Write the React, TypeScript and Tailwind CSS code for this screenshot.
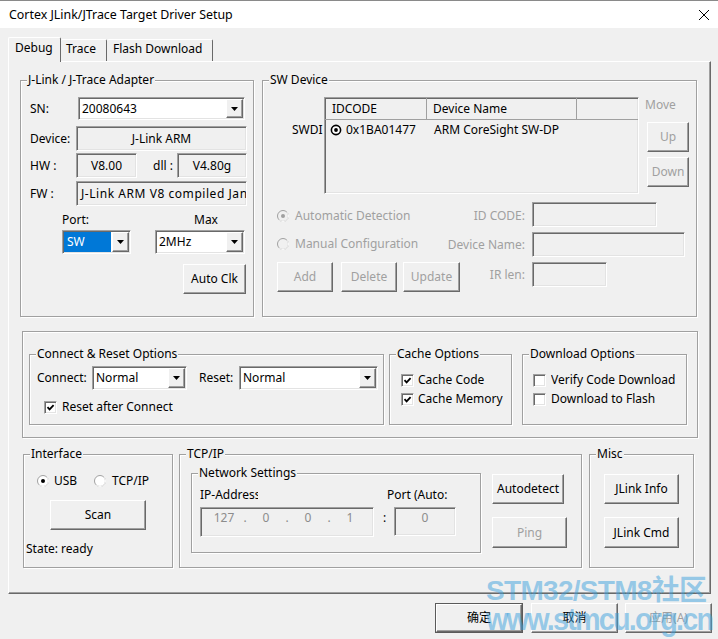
import type { ReactNode } from 'react'

const sunken =
  'border border-t-[#a0a0a0] border-l-[#a0a0a0] border-r-white border-b-white shadow-[inset_1px_1px_0_#696969,inset_-1px_-1px_0_#e3e3e3]'
const raised =
  'border border-t-white border-l-white border-r-[#696969] border-b-[#696969] shadow-[inset_-1px_-1px_0_#a0a0a0]'

function Group({ title, className = '', children }: { title?: string; className?: string; children?: ReactNode }) {
  return (
    <div className={`relative shrink-0 border border-[#a0a0a0] shadow-[inset_1px_1px_0_#fff,1px_1px_0_#fff] ${className}`}>
      {title && (
        <span className="absolute left-[6px] top-[-9px] bg-[#f0f0f0] px-px whitespace-nowrap">{title}</span>
      )}
      {children}
    </div>
  )
}

function Field({ className = '', white = false, children }: { className?: string; white?: boolean; children?: ReactNode }) {
  return (
    <div className={`flex items-center shrink-0 ${sunken} ${white ? 'bg-white' : 'bg-[#f0f0f0]'} ${className}`}>
      {children}
    </div>
  )
}

function Combo({ value, className = '', highlight = false }: { value: string; className?: string; highlight?: boolean }) {
  return (
    <div className={`flex shrink-0 bg-white p-px ${sunken} ${className}`}>
      <div className={`flex-1 flex min-w-0 ${highlight ? '' : 'pl-[2px]'}`}>
        <span
          className={`whitespace-nowrap flex items-center ${
            highlight ? 'flex-1 bg-[#0078d7] text-white pl-[3px] mr-px' : ''
          }`}
        >
          {value}
        </span>
      </div>
      <div className={`w-[17px] flex items-center justify-center bg-[#f0f0f0] ${raised}`}>
        <svg width="7" height="4" viewBox="0 0 7 4">
          <path d="M0 0h7L3.5 4z" fill="#000" />
        </svg>
      </div>
    </div>
  )
}

function Check({ checked = false }: { checked?: boolean }) {
  return (
    <div className={`w-[13px] h-[13px] shrink-0 bg-white flex items-center justify-center ${sunken}`}>
      {checked && (
        <svg width="9" height="9" viewBox="0 0 9 9">
          <path d="M1.5 4.2 3.6 6.4 7.6 2.2" fill="none" stroke="#000" strokeWidth="1.8" />
        </svg>
      )}
    </div>
  )
}

function Radio({ on = false, disabled = false }: { on?: boolean; disabled?: boolean }) {
  return (
    <svg width="12" height="12" viewBox="0 0 12 12" className="shrink-0">
      <circle cx="6" cy="6" r="5.5" fill={disabled ? '#f0f0f0' : '#fff'} stroke="#a0a0a0" />
      <path d="M9.89 2.11A5.5 5.5 0 0 1 2.11 9.89" fill="none" stroke="#fff" />
      {on && <circle cx="6" cy="6" r="2" fill={disabled ? '#a0a0a0' : '#000'} />}
    </svg>
  )
}

function Btn({ children, className = '', disabled = false }: { children: ReactNode; className?: string; disabled?: boolean }) {
  return (
    <div
      className={`flex items-center justify-center shrink-0 bg-[#f0f0f0] whitespace-nowrap ${raised} ${
        disabled ? 'text-[#a0a0a0]' : ''
      } ${className}`}
    >
      {children}
    </div>
  )
}

export default function App() {
  return (
    <div className="w-[718px] h-[639px] bg-[#f0f0f0] relative overflow-hidden font-['Noto_Sans','Noto_Sans_CJK_SC',sans-serif] text-[12px] leading-[16px] text-black">
      {/* title bar */}
      <div className="h-[28px] bg-white border-t border-[#8a8a8a] flex items-center justify-between pl-[9px] pr-[9px]">
        <span className="text-[12.4px]">Cortex JLink/JTrace Target Driver Setup</span>
        <svg width="10" height="10" viewBox="0 0 10 10">
          <path d="M0 0 10 10M10 0 0 10" stroke="#000" strokeWidth="1" />
        </svg>
      </div>

      {/* tabs */}
      <div className="flex items-end relative z-10 mt-[9px] -mb-px pl-[8px]">
        <div className="w-[53px] h-[25px] bg-[#f0f0f0] border-t border-l border-r border-t-white border-l-white border-r-[#696969] rounded-t-[2px] pl-[6px] pt-[2px]">
          Debug
        </div>
        <div className="w-[46px] h-[22px] mb-px bg-[#f0f0f0] border-t border-r border-t-white border-r-[#696969] rounded-t-[2px] pl-[5px] pt-[1px]">
          Trace
        </div>
        <div className="w-[106px] h-[22px] mb-px bg-[#f0f0f0] border-t border-r border-t-white border-r-[#696969] rounded-t-[2px] pl-[6px] pt-[1px]">
          Flash Download
        </div>
      </div>

      {/* tab panel */}
      <div className="ml-[8px] w-[703px] h-[533px] border border-t-white border-l-white border-r-[#696969] border-b-[#696969] shadow-[inset_-1px_-1px_0_#a0a0a0]">
        <div className="flex mt-[18px] ml-[11px]">
          <Group title="J-Link / J-Trace Adapter" className="w-[234px] h-[237px]">
            <div className="flex items-center mt-[16px] pl-[9px]">
              <span className="w-[48px]">SN:</span>
              <Combo value="20080643" className="w-[167px] h-[23px]" />
            </div>
            <div className="flex items-center mt-[6px] pl-[9px]">
              <span className="w-[46px]">Device:</span>
              <Field className="w-[171px] h-[25px] justify-center">J-Link ARM</Field>
            </div>
            <div className="flex items-center mt-[2px] pl-[9px]">
              <span className="w-[46px]">HW :</span>
              <Field className="w-[61px] h-[25px] justify-center">V8.00</Field>
              <span className="ml-[16px] w-[24px] whitespace-nowrap">dll :</span>
              <Field className="w-[70px] h-[25px] justify-center">V4.80g</Field>
            </div>
            <div className="flex items-center mt-[3px] pl-[9px]">
              <span className="w-[46px]">FW :</span>
              <Field className="w-[171px] h-[25px] pl-[4px] overflow-hidden whitespace-nowrap tracking-[0.55px]">
                J-Link ARM V8 compiled Jan 31 2013 11:26:58
              </Field>
            </div>
            <div className="flex mt-[6px] pl-[41px]">
              <span className="w-[132px]">Port:</span>
              <span>Max</span>
            </div>
            <div className="flex mt-[2px] pl-[41px]">
              <Combo value="SW" highlight className="w-[69px] h-[24px]" />
              <Combo value="2MHz" className="ml-[24px] w-[90px] h-[24px]" />
            </div>
            <Btn className="mt-[10px] ml-[162px] w-[63px] h-[30px]">Auto Clk</Btn>
          </Group>

          <Group title="SW Device" className="w-[435px] h-[237px] ml-[8px]">
            <div className="flex items-start mt-[16px] pl-[29px]">
              <span className="w-[32px] mt-[25px] overflow-hidden whitespace-nowrap">SWDI</span>
              <div className={`w-[315px] h-[97px] shrink-0 bg-[#f0f0f0] ${sunken}`}>
                <div className="flex h-[22px] border-b border-[#a0a0a0]">
                  <div className="w-[102px] border-r border-[#a0a0a0] pl-[7px] flex items-center">IDCODE</div>
                  <div className="w-[150px] border-r border-[#a0a0a0] pl-[6px] flex items-center">Device Name</div>
                  <div className="flex-1" />
                </div>
                <div className="flex items-center mt-[2px] pl-[5px] h-[16px]">
                  <svg width="12" height="12" viewBox="0 0 12 12" className="shrink-0">
                    <circle cx="6" cy="6" r="4.6" fill="#fff" stroke="#000" strokeWidth="1.6" />
                    <circle cx="6" cy="6" r="1.9" fill="#000" />
                  </svg>
                  <span className="ml-[4px] w-[88px]">0x1BA01477</span>
                  <span>ARM CoreSight SW-DP</span>
                </div>
              </div>
              <div className="ml-[6px] w-[44px] flex flex-col text-[#a0a0a0]">
                <span>Move</span>
                <Btn disabled className="ml-[2px] mt-[9px] w-[42px] h-[30px]">
                  Up
                </Btn>
                <Btn disabled className="ml-[2px] mt-[5px] w-[42px] h-[30px]">
                  Down
                </Btn>
              </div>
            </div>

            <div className="flex items-center mt-[8px] pl-[14px] h-[25px] text-[#a0a0a0]">
              <div className="w-[165px] flex items-center mt-[2px]">
                <Radio on disabled />
                <span className="ml-[6px]">Automatic Detection</span>
              </div>
              <span className="w-[83px] text-right mt-[2px]">ID CODE:</span>
              <Field className="ml-[7px] w-[125px] h-[25px]" />
            </div>
            <div className="flex items-center mt-[5px] pl-[14px] h-[25px] text-[#a0a0a0]">
              <div className="w-[165px] flex items-center -mt-[2px]">
                <Radio disabled />
                <span className="ml-[6px]">Manual Configuration</span>
              </div>
              <span className="w-[83px] text-right">Device Name:</span>
              <Field className="ml-[7px] w-[153px] h-[25px]" />
            </div>
            <div className="flex items-start mt-[5px] pl-[14px] text-[#a0a0a0]">
              <div className="w-[183px] flex">
                <Btn disabled className="w-[56px] h-[30px]">
                  Add
                </Btn>
                <Btn disabled className="ml-[8px] w-[56px] h-[30px]">
                  Delete
                </Btn>
                <Btn disabled className="ml-[6px] w-[57px] h-[30px]">
                  Update
                </Btn>
              </div>
              <span className="w-[65px] mt-[5px] text-right">IR len:</span>
              <Field className="ml-[7px] w-[75px] h-[25px]" />
            </div>
          </Group>
        </div>

        {/* connect / cache / download */}
        <Group className="mt-[14px] ml-[13px] w-[676px] h-[107px]">
          <div className="flex mt-[22px] ml-[6px]">
            <Group title="Connect & Reset Options" className="w-[355px] h-[71px]">
              <div className="flex items-center mt-[11px] pl-[7px]">
                <span className="w-[55px]">Connect:</span>
                <Combo value="Normal" className="w-[95px] h-[24px]" />
                <span className="ml-[12px] w-[40px]">Reset:</span>
                <Combo value="Normal" className="w-[139px] h-[24px]" />
              </div>
              <div className="flex items-center mt-[9px] pl-[14px] h-[16px]">
                <Check checked />
                <span className="ml-[5px]">Reset after Connect</span>
              </div>
            </Group>
            <Group title="Cache Options" className="ml-[5px] w-[123px] h-[71px]">
              <div className="flex items-center mt-[17px] pl-[11px] h-[16px]">
                <Check checked />
                <span className="ml-[4px]">Cache Code</span>
              </div>
              <div className="flex items-center mt-[3px] pl-[11px] h-[16px]">
                <Check checked />
                <span className="ml-[4px] whitespace-nowrap">Cache Memory</span>
              </div>
            </Group>
            <Group title="Download Options" className="ml-[10px] w-[165px] h-[71px]">
              <div className="flex items-center mt-[17px] pl-[10px] h-[16px]">
                <Check />
                <span className="ml-[5px] w-[131px] overflow-hidden whitespace-nowrap">Verify Code Download</span>
              </div>
              <div className="flex items-center mt-[3px] pl-[10px] h-[16px]">
                <Check />
                <span className="ml-[5px] whitespace-nowrap">Download to Flash</span>
              </div>
            </Group>
          </div>
        </Group>

        {/* interface / tcp / misc */}
        <div className="flex mt-[16px] ml-[14px]">
          <Group title="Interface" className="w-[150px] h-[114px]">
            <div className="flex items-center mt-[18px] pl-[13px] h-[16px]">
              <div className="w-[57px] flex items-center">
                <Radio on />
                <span className="ml-[5px]">USB</span>
              </div>
              <Radio />
              <span className="ml-[6px]">TCP/IP</span>
            </div>
            <Btn className="mt-[11px] ml-[26px] w-[96px] h-[30px]">Scan</Btn>
            <div className="mt-[11px] pl-[2px]">State: ready</div>
          </Group>

          <Group title="TCP/IP" className="ml-[6px] w-[403px] h-[114px]">
            <div className="flex items-start">
              <Group title="Network Settings" className="ml-[11px] mt-[18px] w-[290px] h-[80px]">
                <div className="flex mt-[13px] pl-[8px]">
                  <span className="w-[58px] overflow-hidden whitespace-nowrap">IP-Address:</span>
                  <span className="ml-[129px] whitespace-nowrap">Port (Auto:</span>
                </div>
                <div className="flex items-start mt-[4px] pl-[8px]">
                  <Field className="w-[174px] h-[30px] pl-[8px] pb-[8px] text-[#8c8c8c]">
                    <span className="w-[30px] text-center">127</span>
                    <span className="w-[12px] text-center">.</span>
                    <span className="w-[30px] text-center">0</span>
                    <span className="w-[12px] text-center">.</span>
                    <span className="w-[30px] text-center">0</span>
                    <span className="w-[12px] text-center">.</span>
                    <span className="w-[30px] text-center">1</span>
                  </Field>
                  <span className="ml-[9px] w-[11px] mt-[3px]">:</span>
                  <Field className="w-[62px] h-[29px] justify-center pb-[7px] text-[#8c8c8c]">0</Field>
                </div>
              </Group>
              <div className="ml-[11px] mt-[19px] flex flex-col">
                <Btn className="w-[72px] h-[30px]">Autodetect</Btn>
                <Btn disabled className="mt-[13px] w-[75px] h-[31px]">
                  Ping
                </Btn>
              </div>
            </div>
          </Group>

          <Group title="Misc" className="ml-[7px] w-[105px] h-[114px]">
            <div className="flex flex-col mt-[19px] pl-[14px]">
              <Btn className="w-[75px] h-[30px]">JLink Info</Btn>
              <Btn className="mt-[13px] w-[75px] h-[31px]">JLink Cmd</Btn>
            </div>
          </Group>
        </div>
      </div>

      {/* dialog buttons */}
      <div className="flex justify-end mt-[9px] pr-[6px]">
        <div className="w-[88px] h-[30px] border border-[#5a5a5a]">
          <Btn className="w-full h-full">确定</Btn>
        </div>
        <Btn className="ml-[8px] w-[87px] h-[30px]">取消</Btn>
        <Btn disabled className="ml-[7px] w-[87px] h-[30px]">
          应用(A)
        </Btn>
      </div>

      {/* watermark */}
      <div className="absolute left-[486px] top-[577px] pointer-events-none font-['Liberation_Sans','Noto_Sans_CJK_SC',sans-serif] font-bold text-[rgba(60,160,220,0.5)]">
        <div className="text-[28px] leading-[28px] tracking-[-0.7px] whitespace-nowrap">STM32/STM8社区</div>
        <div className="text-[32px] leading-[28px] tracking-[-2px] whitespace-nowrap origin-left scale-x-90">
          www.stmcu.org.cn
        </div>
      </div>
    </div>
  )
}
